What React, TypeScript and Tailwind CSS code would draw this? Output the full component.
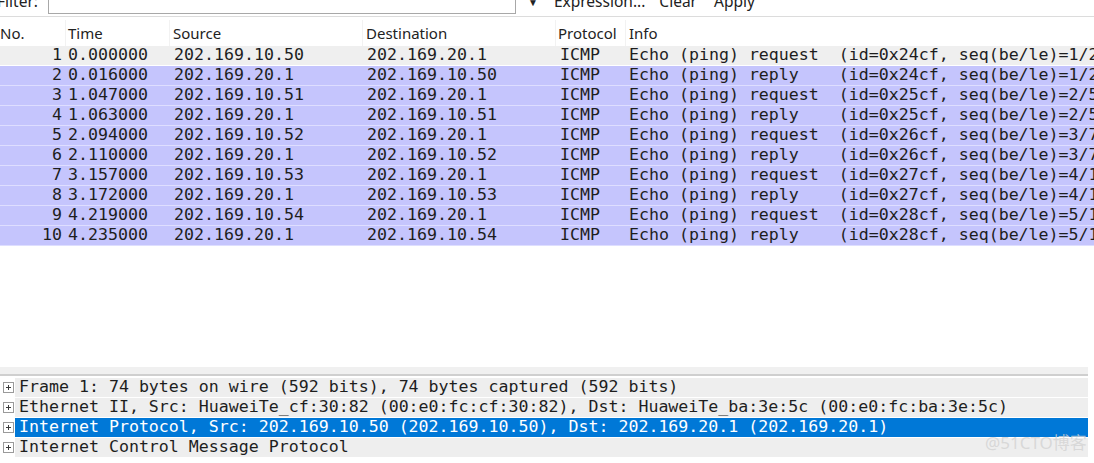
const mono = "font-['DejaVu_Sans_Mono','Liberation_Mono',monospace] text-[16.6px]";

const packets = [
  { no: 1, time: "0.000000", src: "202.169.10.50", dst: "202.169.20.1", info: "Echo (ping) request  (id=0x24cf, seq(be/le)=1/256, ttl=128)" },
  { no: 2, time: "0.016000", src: "202.169.20.1", dst: "202.169.10.50", info: "Echo (ping) reply    (id=0x24cf, seq(be/le)=1/256, ttl=127)" },
  { no: 3, time: "1.047000", src: "202.169.10.51", dst: "202.169.20.1", info: "Echo (ping) request  (id=0x25cf, seq(be/le)=2/512, ttl=128)" },
  { no: 4, time: "1.063000", src: "202.169.20.1", dst: "202.169.10.51", info: "Echo (ping) reply    (id=0x25cf, seq(be/le)=2/512, ttl=127)" },
  { no: 5, time: "2.094000", src: "202.169.10.52", dst: "202.169.20.1", info: "Echo (ping) request  (id=0x26cf, seq(be/le)=3/768, ttl=128)" },
  { no: 6, time: "2.110000", src: "202.169.20.1", dst: "202.169.10.52", info: "Echo (ping) reply    (id=0x26cf, seq(be/le)=3/768, ttl=127)" },
  { no: 7, time: "3.157000", src: "202.169.10.53", dst: "202.169.20.1", info: "Echo (ping) request  (id=0x27cf, seq(be/le)=4/1024, ttl=128)" },
  { no: 8, time: "3.172000", src: "202.169.20.1", dst: "202.169.10.53", info: "Echo (ping) reply    (id=0x27cf, seq(be/le)=4/1024, ttl=127)" },
  { no: 9, time: "4.219000", src: "202.169.10.54", dst: "202.169.20.1", info: "Echo (ping) request  (id=0x28cf, seq(be/le)=5/1280, ttl=128)" },
  { no: 10, time: "4.235000", src: "202.169.20.1", dst: "202.169.10.54", info: "Echo (ping) reply    (id=0x28cf, seq(be/le)=5/1280, ttl=127)" },
];

const details = [
  "Frame 1: 74 bytes on wire (592 bits), 74 bytes captured (592 bits)",
  "Ethernet II, Src: HuaweiTe_cf:30:82 (00:e0:fc:cf:30:82), Dst: HuaweiTe_ba:3e:5c (00:e0:fc:ba:3e:5c)",
  "Internet Protocol, Src: 202.169.10.50 (202.169.10.50), Dst: 202.169.20.1 (202.169.20.1)",
  "Internet Control Message Protocol",
];

function PlusBox() {
  return (
    <svg width="11" height="11" viewBox="0 0 11 11" className="block">
      <rect x="0.5" y="0.5" width="10" height="10" fill="#fff" stroke="#9a9a9a" />
      <path d="M3 5.5h5M5.5 3v5" stroke="#3a3a3a" strokeWidth="1" />
    </svg>
  );
}

export default function App() {
  return (
    <div className="relative flex h-[463px] w-[1094px] flex-col overflow-hidden bg-white text-[#1e1e1e]">
      {/* Filter toolbar, mostly scrolled off the top */}
      <div className="-mt-[12px] flex h-[28px] flex-none items-center font-['Noto_Sans',sans-serif] text-[15.5px] text-[#222]">
        <span className="-ml-[3px] w-[51px] flex-none">Filter:</span>
        <div className="h-[24px] w-[468px] flex-none border border-[#a8a8a8] bg-white" />
        <span className="ml-[12px] text-[10px]">▼</span>
        <span className="ml-[16px]">Expression...</span>
        <span className="ml-[14px]">Clear</span>
        <span className="ml-[17px]">Apply</span>
      </div>
      <div className="h-px flex-none bg-[#dcdcdc]" />
      <div className="h-[3px] flex-none" />

      {/* Column header */}
      <div className="flex h-[26px] flex-none items-center bg-[#f2f2f2] font-['Noto_Sans',sans-serif] text-[15px] text-[#222]">
        <div className="flex h-full w-[65px] flex-none items-center bg-white">No.</div>
        <div className="ml-px flex h-full w-[103px] flex-none items-center bg-white pl-[2px]">Time</div>
        <div className="ml-px flex h-full w-[192px] flex-none items-center bg-white pl-[3px]">Source</div>
        <div className="ml-px flex h-full w-[192px] flex-none items-center bg-white pl-[3px]">Destination</div>
        <div className="ml-px flex h-full w-[69px] flex-none items-center bg-white pl-[2px]">Protocol</div>
        <div className="ml-px flex h-full min-w-0 flex-1 items-center bg-white pl-[3px]">Info</div>
      </div>

      {/* Packet list */}
      <div className={`flex-none ${mono}`}>
        {packets.map((p) => (
          <div
            key={p.no}
            className={`flex h-[20px] items-center overflow-hidden whitespace-pre border-b ${
              p.no === 1 ? "border-white bg-[#efefef]" : "border-[#dedeff] bg-[#c5c5fd]"
            }`}
          >
            <div className="w-[63px] flex-none pr-[1px] text-right">{p.no}</div>
            <div className="w-[107px] flex-none pl-[5px]">{p.time}</div>
            <div className="w-[193px] flex-none pl-[4px]">{p.src}</div>
            <div className="w-[193px] flex-none pl-[4px]">{p.dst}</div>
            <div className="w-[70px] flex-none pl-[4px]">ICMP</div>
            <div className="min-w-0 flex-1 overflow-hidden pl-[3px]">{p.info}</div>
          </div>
        ))}
      </div>

      <div className="flex-1" />

      {/* Splitter */}
      <div className="h-[7px] w-[1088px] flex-none bg-[#f0f0f0]" />
      <div className="h-[2px] w-[1088px] flex-none bg-[#cfcfcf]" />
      <div className="h-[2px] flex-none" />

      {/* Packet details */}
      <div className={`w-[1088px] flex-none ${mono}`}>
        {details.map((d, i) => (
          <div key={i} className="flex h-[20px] items-stretch border-b border-white">
            <div className="flex w-[15px] flex-none items-center justify-center bg-white pl-[1px]">
              <PlusBox />
            </div>
            <div
              className={`flex min-w-0 flex-1 items-center overflow-hidden whitespace-pre pl-[4px] ${
                i === 2 ? "bg-[#0078d7] text-white" : "bg-[#eeeeee]"
              }`}
            >
              {d}
            </div>
          </div>
        ))}
      </div>
      <div className="h-[5px] flex-none" />

      {/* Watermark */}
      <div className="pointer-events-none absolute left-[985px] top-[430px] font-['Noto_Sans','Noto_Sans_CJK_SC',sans-serif] text-[17px] text-[#d2d2d2]/80">
        @51CTO博客
      </div>
    </div>
  );
}
